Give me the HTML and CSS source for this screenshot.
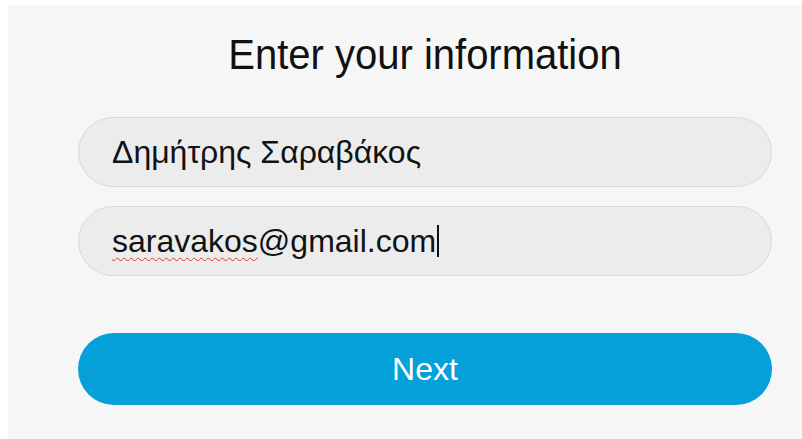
FILE: index.html
```html
<!DOCTYPE html>
<html lang="el">
<head>
<meta charset="utf-8">
<title>Enter your information</title>
<link rel="stylesheet" href="styles.css">
</head>
<body>
  <main class="panel">
    <h1 class="title">Enter your information</h1>
    <form class="form">
      <div class="field">Δημήτρης Σαραβάκος</div>
      <div class="field field--focused"><span class="misspelled">saravakos</span>@gmail.com<span class="caret"></span></div>
      <button class="next" type="button">Next</button>
    </form>
  </main>
</body>
</html>
```
FILE: styles.css
```css
html, body {
  margin: 0;
  padding: 0;
  background: #ffffff;
  overflow: hidden;
}

body {
  width: 802px;
  height: 439px;
  font-family: "Liberation Sans", Arial, sans-serif;
  color: #111111;
}

.panel {
  margin: 5px 0 0 8px;
  width: 834px;
  height: 434px;
  background: #f6f6f6;
  box-sizing: border-box;
  padding: 27px 70px 0 70px;
}

.title {
  margin: 0;
  font-weight: normal;
  font-size: 40px;
  line-height: 44px;
  text-align: center;
  color: #111111;
  transform: scaleY(1.08);
}

.form {
  display: flex;
  flex-direction: column;
  margin-top: 41px;
}

.field {
  height: 70px;
  box-sizing: border-box;
  border: 1px solid #d9d9d9;
  border-radius: 36px;
  background: #ececec;
  padding-left: 33px;
  display: flex;
  align-items: center;
  font-size: 32px;
  color: #121212;
}

.field + .field {
  margin-top: 19px;
}

.misspelled {
  text-decoration: underline wavy #e0383a;
  text-decoration-thickness: 1px;
  text-underline-offset: 5px;
}

.caret {
  display: inline-block;
  width: 2px;
  height: 32px;
  margin-left: 1px;
  background: #111111;
}

.next {
  margin-top: 57px;
  height: 72px;
  border: none;
  border-radius: 36px;
  background: #05a0d8;
  color: #ffffff;
  font-family: "Liberation Sans", Arial, sans-serif;
  font-size: 32px;
  padding: 0;
}
```
